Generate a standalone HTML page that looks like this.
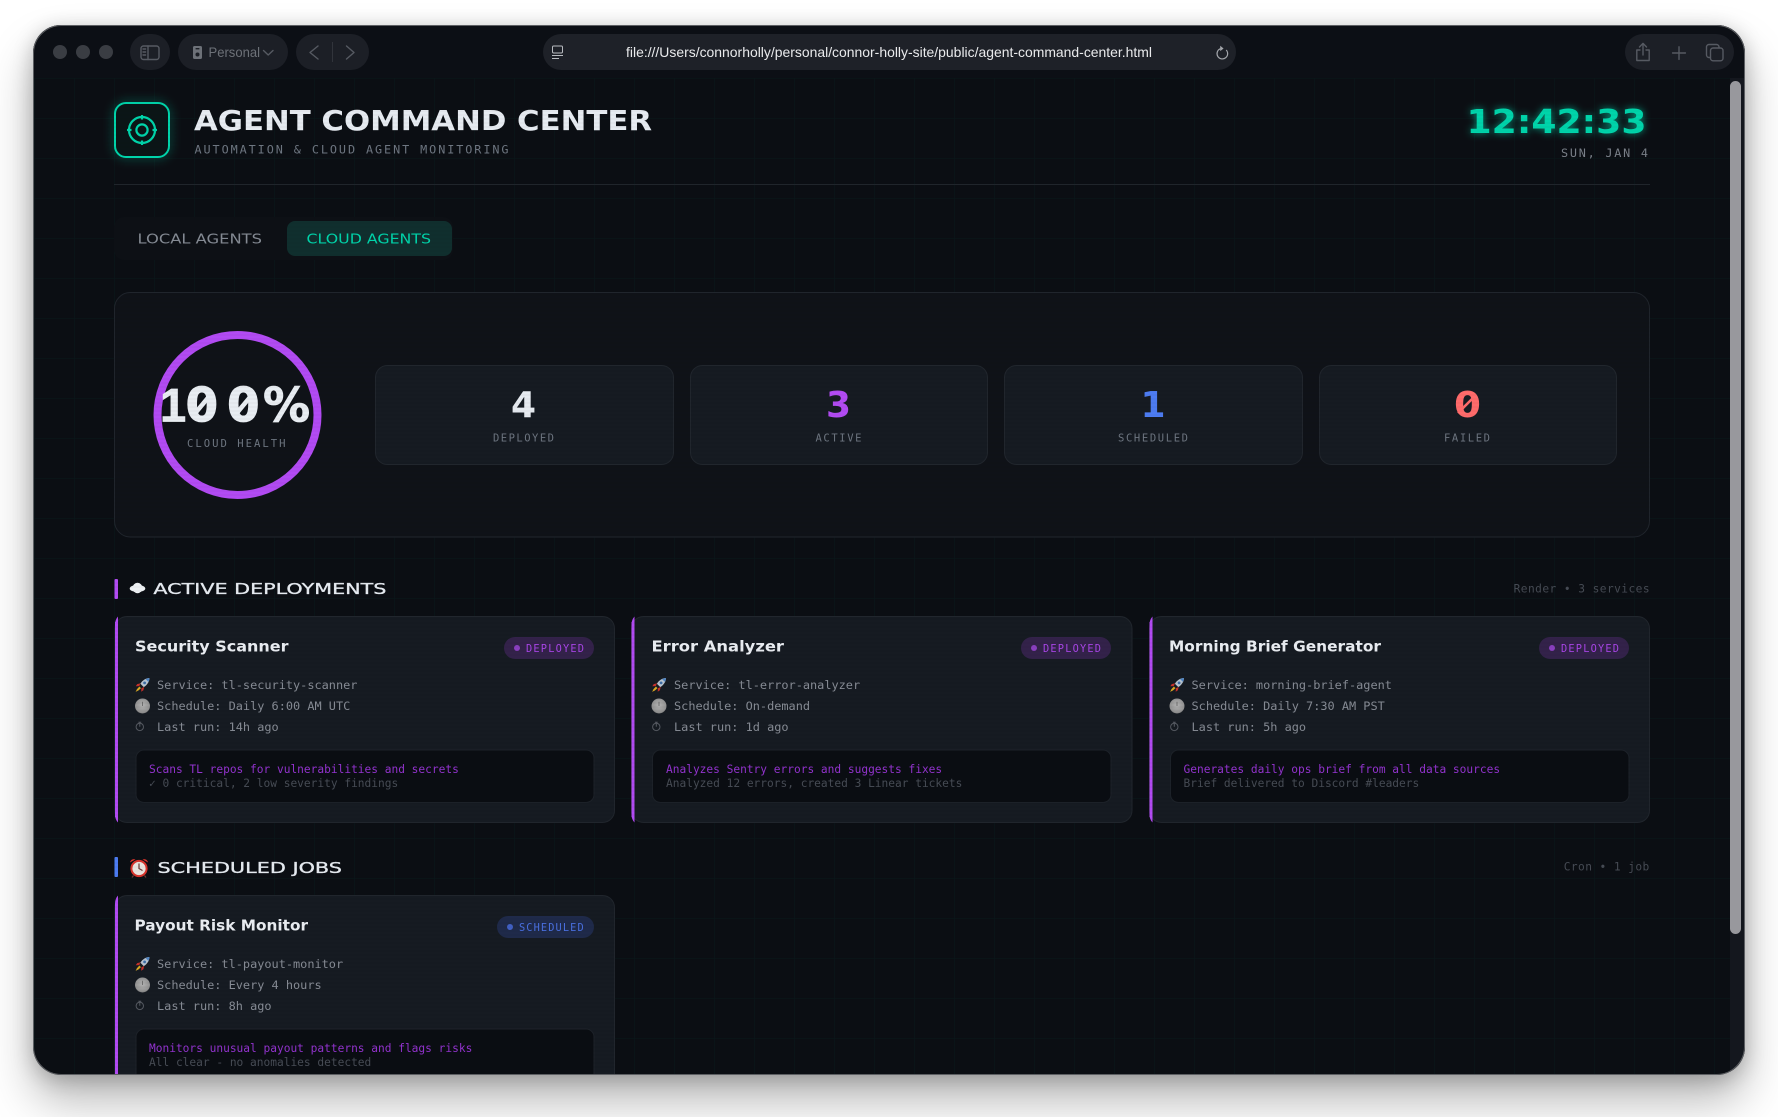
<!DOCTYPE html>
<html lang="en">
<head>
<meta charset="utf-8">
<title>Agent Command Center</title>
<style>
html,body{margin:0;padding:0;width:1778px;height:1117px;background:#fff;overflow:hidden}
#win{position:absolute;left:33px;top:25px;width:1712px;height:1050px;border-radius:28px;box-shadow:0 26px 46px rgba(0,0,0,.28),0 4px 20px rgba(0,0,0,.22)}
svg{position:absolute;left:0;top:0}
.m{font-family:"DejaVu Sans Mono","Liberation Mono",monospace}
.d{font-family:"DejaVu Sans","Liberation Sans",sans-serif;font-weight:700}
.s{font-family:"Liberation Sans",sans-serif}
.row{font-size:11.9px;fill:#868b94}
.l1{font-size:11.2px;fill:#9333cf}
.l2{font-size:11.2px;fill:#474c55}
.ct{font-size:15px;fill:#e9edf2;font-weight:700}
.lbl{font-size:10.5px;fill:#6e7681}
.ico{fill:none;stroke:#565a62;stroke-width:1.4;stroke-linecap:round;stroke-linejoin:round}
</style>
</head>
<body>
<div id="win"></div>
<svg width="1778" height="1117" viewBox="0 0 1778 1117" xmlns="http://www.w3.org/2000/svg">
<defs>
<clipPath id="wc"><rect x="33" y="25" width="1712" height="1050" rx="28"/></clipPath>
<pattern id="grid" x="34" y="78" width="40" height="40" patternUnits="userSpaceOnUse">
<path d="M0 0H40M0 0V40" fill="none" stroke="#00d4aa" stroke-opacity=".06" stroke-width="1"/>
</pattern>
<pattern id="scan" x="0" y="0" width="4" height="4" patternUnits="userSpaceOnUse">
<rect x="0" y="2" width="4" height="2" fill="#000" fill-opacity=".025"/>
</pattern>
<filter id="g1" x="-40%" y="-40%" width="180%" height="180%"><feGaussianBlur stdDeviation="5"/></filter>
<filter id="g2" x="-20%" y="-60%" width="140%" height="220%"><feGaussianBlur stdDeviation="4"/></filter>
<radialGradient id="clk" cx=".5" cy=".45" r=".6"><stop offset="0" stop-color="#b2b2b2"/><stop offset=".8" stop-color="#929292"/><stop offset="1" stop-color="#5e5e5e"/></radialGradient>
<symbol id="rocket" viewBox="0 0 15 15" overflow="visible">
<path d="M14.5 .5C11 .6 7.6 2.6 5.4 6.2L8.8 9.6C12.4 7.4 14.4 4 14.5 .5Z" fill="#b7c3cf"/>
<path d="M14.5 .5C13 .6 11.8 1 10.6 1.6L13.4 4.4C14 3.2 14.4 2 14.5 .5Z" fill="#4f86c6"/>
<circle cx="9.6" cy="5.4" r="1.4" fill="#3f6fa8"/>
<path d="M5.6 5.8 2.2 6.6.8 8.8 4.2 8.6ZM9.2 9.4 8.4 12.8 6.2 14.2 6.4 10.8Z" fill="#c4302b"/>
<path d="M4.4 9 6 10.6 3.4 13 .6 14.4 2 11.6Z" fill="#d8a923"/>
</symbol>
<symbol id="clock" viewBox="0 0 15 15" overflow="visible">
<circle cx="7.5" cy="7.5" r="7.5" fill="url(#clk)"/>
<path d="M7.5 3.2V7.5" stroke="#6a6a6a" stroke-width=".9"/>
</symbol>
<symbol id="timer" viewBox="0 0 10 10" overflow="visible">
<circle cx="4.8" cy="5.4" r="3.7" fill="none" stroke="#565a62" stroke-width="1"/>
<path d="M4.8 .8V5.2M3.4.7H6.2" fill="none" stroke="#565a62" stroke-width="1"/>
</symbol>
</defs>

<g clip-path="url(#wc)">
<rect x="33" y="25" width="1712" height="1050" fill="#0b0e13"/>
<rect x="33" y="78" width="1712" height="997" fill="url(#grid)"/>
<rect x="33" y="25" width="1712" height="53" fill="#0c0f15"/>

<!-- toolbar -->
<circle cx="60" cy="52" r="7" fill="#3a3d43"/><circle cx="83" cy="52" r="7" fill="#3a3d43"/><circle cx="106" cy="52" r="7" fill="#3a3d43"/>
<rect x="130" y="34" width="40" height="36" rx="18" fill="#1c1f26"/>
<rect x="141" y="46" width="18" height="13.5" rx="2.5" class="ico"/><path d="M148 46V59.5" class="ico"/>
<path d="M143 49h2.6M143 52h2.6M143 55h2.6" class="ico" stroke-width="1"/>
<rect x="178" y="34" width="110" height="36" rx="18" fill="#1c1f26"/>
<rect x="193" y="46" width="9" height="13" rx="1.6" fill="#6d7178"/><circle cx="197.5" cy="54.5" r="2" fill="#1c1f26"/><rect x="195.6" y="48" width="3.8" height="1.4" fill="#1c1f26"/>
<text class="s" x="208.5" y="57" font-size="14" fill="#6d7178" textLength="51.5" lengthAdjust="spacingAndGlyphs">Personal</text>
<path d="M263.5 50.5 268.2 55 273 50.5" class="ico" stroke="#6d7178"/>
<rect x="296" y="34" width="73" height="36" rx="18" fill="#1c1f26"/>
<path d="M318 46 310 52.5 318 59" class="ico" stroke="#4c5057"/><path d="M346.5 46 354 52.5 346.5 59" class="ico" stroke="#4c5057"/>
<path d="M332.5 42V62" stroke="#31343b" stroke-width="1"/>
<rect x="543" y="34" width="693" height="36" rx="18" fill="#1e2128"/>
<rect x="552.5" y="46" width="10" height="7" rx="1.2" fill="none" stroke="#b8bbc0" stroke-width="1"/>
<path d="M552 55.5H563M552 58.5H559" stroke="#b8bbc0" stroke-width="1"/>
<text class="s" x="626" y="57" font-size="14" fill="#e9eaec" textLength="526" lengthAdjust="spacingAndGlyphs">file:///Users/connorholly/personal/connor-holly-site/public/agent-command-center.html</text>
<path d="M1226.2 50A5.3 5.3 0 1 1 1220.4 48.7" fill="none" stroke="#a3a6ab" stroke-width="1.2"/>
<path d="M1220.2 45.7 1223.6 48.5 1220.2 51.1Z" fill="#a3a6ab"/>
<rect x="1625" y="34" width="109" height="36" rx="18" fill="#1c1f26"/>
<path d="M1643 44V55M1639.5 47 1643 43.4 1646.5 47M1640 50H1636.8V60.5H1649.2V50H1646" class="ico" stroke="#4e5158"/>
<path d="M1679 46.8V59.4M1672.6 53H1685.4" class="ico" stroke="#62656c"/>
<rect x="1710.5" y="48" width="12.5" height="12.8" rx="2.6" class="ico" stroke="#4e5158"/>
<path d="M1710 57.5H1709A2.6 2.6 0 0 1 1706.5 55V47A2.6 2.6 0 0 1 1709 44.5H1716.5A2.6 2.6 0 0 1 1719 47V47.6" class="ico" stroke="#4e5158"/>

<!-- header -->
<rect x="115" y="103" width="54" height="54" rx="12" fill="none" stroke="#00d4aa" stroke-width="3" stroke-opacity=".55" filter="url(#g1)"/>
<rect x="115" y="103" width="54" height="54" rx="11" fill="#0b1517" stroke="#00d4aa" stroke-width="2"/>
<g fill="none" stroke="#00d4aa" stroke-width="2.2">
<circle cx="142" cy="130" r="13"/><circle cx="142" cy="130" r="5.6"/>
<path d="M142 115V119.5M142 140.5V145M127 130H131.5M152.5 130H157"/>
</g>
<text class="d" x="194" y="130" font-size="28" fill="#e6ebf1" textLength="458" lengthAdjust="spacingAndGlyphs">AGENT COMMAND CENTER</text>
<text class="m" x="194.5" y="153.6" font-size="11.8" fill="#6e7681" textLength="314">AUTOMATION &amp; CLOUD AGENT MONITORING</text>

<text class="d" x="1466.5" y="133" font-size="33" fill="#00d4aa" fill-opacity=".7" textLength="180" lengthAdjust="spacingAndGlyphs" filter="url(#g2)">12:42:33</text>
<text class="d" x="1466.5" y="133" font-size="33" fill="#00d4aa" textLength="180" lengthAdjust="spacingAndGlyphs">12:42:33</text>
<text class="m" x="1561" y="157" font-size="11.8" fill="#7a8089" textLength="87">SUN, JAN 4</text>
<rect x="114" y="184" width="1536" height="1" fill="#20252b"/>

<!-- tabs -->
<rect x="114" y="217" width="339" height="43" rx="10" fill="#0d1015"/>
<rect x="287" y="221" width="165" height="35" rx="8" fill="#102f2e"/>
<text class="d" x="137.5" y="243.3" font-size="13.6" style="font-weight:400" fill="#858b94" textLength="124.5" lengthAdjust="spacingAndGlyphs">LOCAL AGENTS</text>
<text class="d" x="306.5" y="243.3" font-size="13.6" style="font-weight:400" fill="#00d4aa" textLength="124.5" lengthAdjust="spacingAndGlyphs">CLOUD AGENTS</text>

<!-- health panel -->
<rect x="114.5" y="292.5" width="1535" height="244.5" rx="16" fill="#0f1218" stroke="#20252c"/>
<circle cx="237.5" cy="415" r="80" fill="none" stroke="#b24bf3" stroke-width="8"/>
<text class="d" y="421.7" font-size="47" fill="#e8edf2" stroke="#e8edf2" stroke-width=".8"><tspan x="160" style="font-family:'Liberation Sans',sans-serif">1</tspan><tspan x="185.5 227">00</tspan><tspan x="263">%</tspan></text>
<path d="M192 417 212 393M233.500 417 253.500 393" stroke="#e8edf2" stroke-width="4.5"/>
<text class="m" x="187" y="447" font-size="10.6" fill="#6e7681" textLength="98.5">CLOUD HEALTH</text>

<g fill="#161b22" stroke="#21262d">
<rect x="375.5" y="365.5" width="298" height="99" rx="12"/>
<rect x="690.5" y="365.5" width="297" height="99" rx="12"/>
<rect x="1004.5" y="365.5" width="298" height="99" rx="12"/>
<rect x="1319.5" y="365.5" width="297" height="99" rx="12"/>
</g>
<g class="d" font-size="36" text-anchor="middle">
<text x="523.5" y="417" fill="#e6ebf1">4</text>
<text x="838.5" y="417" fill="#b24bf3">3</text>
<text x="1153" y="417" fill="#4d7cf2">1</text>
<text x="1467.5" y="417" fill="#ff6b6b" textLength="27" lengthAdjust="spacingAndGlyphs">0</text>
</g>
<path d="M1458 413 1476 395" stroke="#ff6b6b" stroke-width="2.6"/>
<g class="m lbl">
<text x="493" y="441.5" textLength="61">DEPLOYED</text>
<text x="815.5" y="441.5" textLength="46">ACTIVE</text>
<text x="1118" y="441.5" textLength="70">SCHEDULED</text>
<text x="1444" y="441.5" textLength="46">FAILED</text>
</g>

<!-- section 1 -->
<rect x="114.5" y="579" width="3.5" height="20" rx="1" fill="#b24bf3"/>
<g fill="#eef1f4"><ellipse cx="137.5" cy="588.500" rx="7.800" ry="3.600"/><ellipse cx="137.500" cy="588" rx="5" ry="5.200"/></g>
<text class="d" x="153.4" y="594" font-size="15" style="font-weight:400" fill="#e6ebf1" stroke="#e6ebf1" stroke-width=".3" textLength="233" lengthAdjust="spacingAndGlyphs">ACTIVE DEPLOYMENTS</text>
<text class="m" x="1513.6" y="592.300" font-size="11.2" fill="#464b54" textLength="136">Render • 3 services</text>

<!-- card 1 -->
<g>
<rect x="115" y="616.5" width="499.5" height="206" rx="12" fill="#161b22" stroke="#21262d"/>
<path d="M118 616.5A12 12 0 0 0 115 624.5V814.5A12 12 0 0 0 118 822.5Z" fill="#b24bf3"/>
<rect x="115" y="622" width="3" height="195" fill="#b24bf3"/>
<text class="d ct" x="135" y="651.300" textLength="153.500" lengthAdjust="spacingAndGlyphs">Security Scanner</text>
<rect x="504" y="637" width="90" height="22" rx="11" fill="#33224a"/>
<circle cx="517" cy="648" r="3" fill="#8a3fc0"/>
<text class="m" x="526" y="652" font-size="10.3" fill="#a845e6" textLength="58">DEPLOYED</text>
<use href="#rocket" x="135" y="677.500" width="15" height="15"/>
<use href="#clock" x="135" y="698.500" width="15" height="15"/>
<use href="#timer" x="135" y="721.500" width="10" height="10"/>
<text class="m row" x="157" y="689">Service: tl-security-scanner</text>
<text class="m row" x="157" y="710">Schedule: Daily 6:00 AM UTC</text>
<text class="m row" x="157" y="731">Last run: 14h ago</text>
<rect x="136" y="750" width="458" height="52.500" rx="8" fill="#0a0d12" stroke="#1d2229"/>
<text class="m l1" x="149" y="773">Scans TL repos for vulnerabilities and secrets</text>
<text class="m l2" x="149" y="787">✓ 0 critical, 2 low severity findings</text>
</g>

<!-- card 2 -->
<g>
<rect x="631.5" y="616.5" width="500.5" height="206" rx="12" fill="#161b22" stroke="#21262d"/>
<path d="M634.5 616.5A12 12 0 0 0 631.5 624.5V814.5A12 12 0 0 0 634.5 822.5Z" fill="#b24bf3"/>
<rect x="631.5" y="622" width="3" height="195" fill="#b24bf3"/>
<text class="d ct" x="651.500" y="651.300" textLength="132.500" lengthAdjust="spacingAndGlyphs">Error Analyzer</text>
<rect x="1021" y="637" width="90" height="22" rx="11" fill="#33224a"/>
<circle cx="1034" cy="648" r="3" fill="#8a3fc0"/>
<text class="m" x="1043" y="652" font-size="10.3" fill="#a845e6" textLength="58">DEPLOYED</text>
<use href="#rocket" x="651.500" y="677.500" width="15" height="15"/>
<use href="#clock" x="651.500" y="698.500" width="15" height="15"/>
<use href="#timer" x="651.500" y="721.500" width="10" height="10"/>
<text class="m row" x="674" y="689">Service: tl-error-analyzer</text>
<text class="m row" x="674" y="710">Schedule: On-demand</text>
<text class="m row" x="674" y="731">Last run: 1d ago</text>
<rect x="652.500" y="750" width="458.500" height="52.500" rx="8" fill="#0a0d12" stroke="#1d2229"/>
<text class="m l1" x="666" y="773">Analyzes Sentry errors and suggests fixes</text>
<text class="m l2" x="666" y="787">Analyzed 12 errors, created 3 Linear tickets</text>
</g>

<!-- card 3 -->
<g>
<rect x="1149.5" y="616.5" width="500" height="206" rx="12" fill="#161b22" stroke="#21262d"/>
<path d="M1152.5 616.5A12 12 0 0 0 1149.5 624.5V814.5A12 12 0 0 0 1152.5 822.5Z" fill="#b24bf3"/>
<rect x="1149.5" y="622" width="3" height="195" fill="#b24bf3"/>
<text class="d ct" x="1169" y="651.300" textLength="212" lengthAdjust="spacingAndGlyphs">Morning Brief Generator</text>
<rect x="1539" y="637" width="90" height="22" rx="11" fill="#33224a"/>
<circle cx="1552" cy="648" r="3" fill="#8a3fc0"/>
<text class="m" x="1561" y="652" font-size="10.3" fill="#a845e6" textLength="58">DEPLOYED</text>
<use href="#rocket" x="1169.500" y="677.500" width="15" height="15"/>
<use href="#clock" x="1169.500" y="698.500" width="15" height="15"/>
<use href="#timer" x="1169.500" y="721.500" width="10" height="10"/>
<text class="m row" x="1191.500" y="689">Service: morning-brief-agent</text>
<text class="m row" x="1191.500" y="710">Schedule: Daily 7:30 AM PST</text>
<text class="m row" x="1191.500" y="731">Last run: 5h ago</text>
<rect x="1170.500" y="750" width="458.500" height="52.500" rx="8" fill="#0a0d12" stroke="#1d2229"/>
<text class="m l1" x="1183.5" y="773">Generates daily ops brief from all data sources</text>
<text class="m l2" x="1183.5" y="787">Brief delivered to Discord #leaders</text>
</g>

<!-- section 2 -->
<rect x="114.5" y="857" width="3.5" height="20" rx="1" fill="#4d7cf2"/>
<circle cx="139" cy="868.5" r="7.6" fill="#e9e4df" stroke="#d8342c" stroke-width="2"/>
<path d="M130 862.5A4 4 0 0 1 135.5 859.4ZM148 862.5A4 4 0 0 0 142.5 859.4Z" fill="#d8342c"/>
<path d="M139 863.5V868.5L142.5 870.5M133.5 875.5 132 877.5M144.5 875.5 146 877.5" stroke="#6b3a35" stroke-width="1.2" fill="none"/>
<text class="d" x="157.5" y="873" font-size="15" style="font-weight:400" fill="#e6ebf1" stroke="#e6ebf1" stroke-width=".3" textLength="184.5" lengthAdjust="spacingAndGlyphs">SCHEDULED JOBS</text>
<text class="m" x="1563.7" y="870.500" font-size="11.2" fill="#464b54" textLength="85.6">Cron • 1 job</text>

<!-- card 4 -->
<g>
<rect x="115" y="895.5" width="499.5" height="206" rx="12" fill="#161b22" stroke="#21262d"/>
<path d="M118 895.5A12 12 0 0 0 115 903.5V1093.5H118Z" fill="#b24bf3"/>
<text class="d ct" x="134.500" y="930.300" textLength="173.500" lengthAdjust="spacingAndGlyphs">Payout Risk Monitor</text>
<rect x="497" y="916" width="97" height="22" rx="11" fill="#1f2a4a"/>
<circle cx="510" cy="927" r="3" fill="#4160c4"/>
<text class="m" x="519" y="931" font-size="10.3" fill="#4a70e0" textLength="64.7">SCHEDULED</text>
<use href="#rocket" x="135" y="956.500" width="15" height="15"/>
<use href="#clock" x="135" y="977.500" width="15" height="15"/>
<use href="#timer" x="135" y="1000.500" width="10" height="10"/>
<text class="m row" x="157" y="968">Service: tl-payout-monitor</text>
<text class="m row" x="157" y="989">Schedule: Every 4 hours</text>
<text class="m row" x="157" y="1010">Last run: 8h ago</text>
<rect x="136" y="1029" width="458" height="60" rx="8" fill="#0a0d12" stroke="#1d2229"/>
<text class="m l1" x="149" y="1052">Monitors unusual payout patterns and flags risks</text>
<text class="m l2" x="149" y="1066">All clear - no anomalies detected</text>
</g>

<rect x="33" y="78" width="1697" height="997" fill="url(#scan)"/>

<!-- scrollbar -->
<rect x="1730" y="78" width="15" height="997" fill="#14171e"/>
<rect x="1730" y="81" width="11" height="853" rx="5.5" fill="#98989d"/>
</g>
<rect x="33.5" y="25.5" width="1711" height="1049" rx="28" fill="none" stroke="#5d5f63" stroke-width="1"/>
</svg>
</body>
</html>
